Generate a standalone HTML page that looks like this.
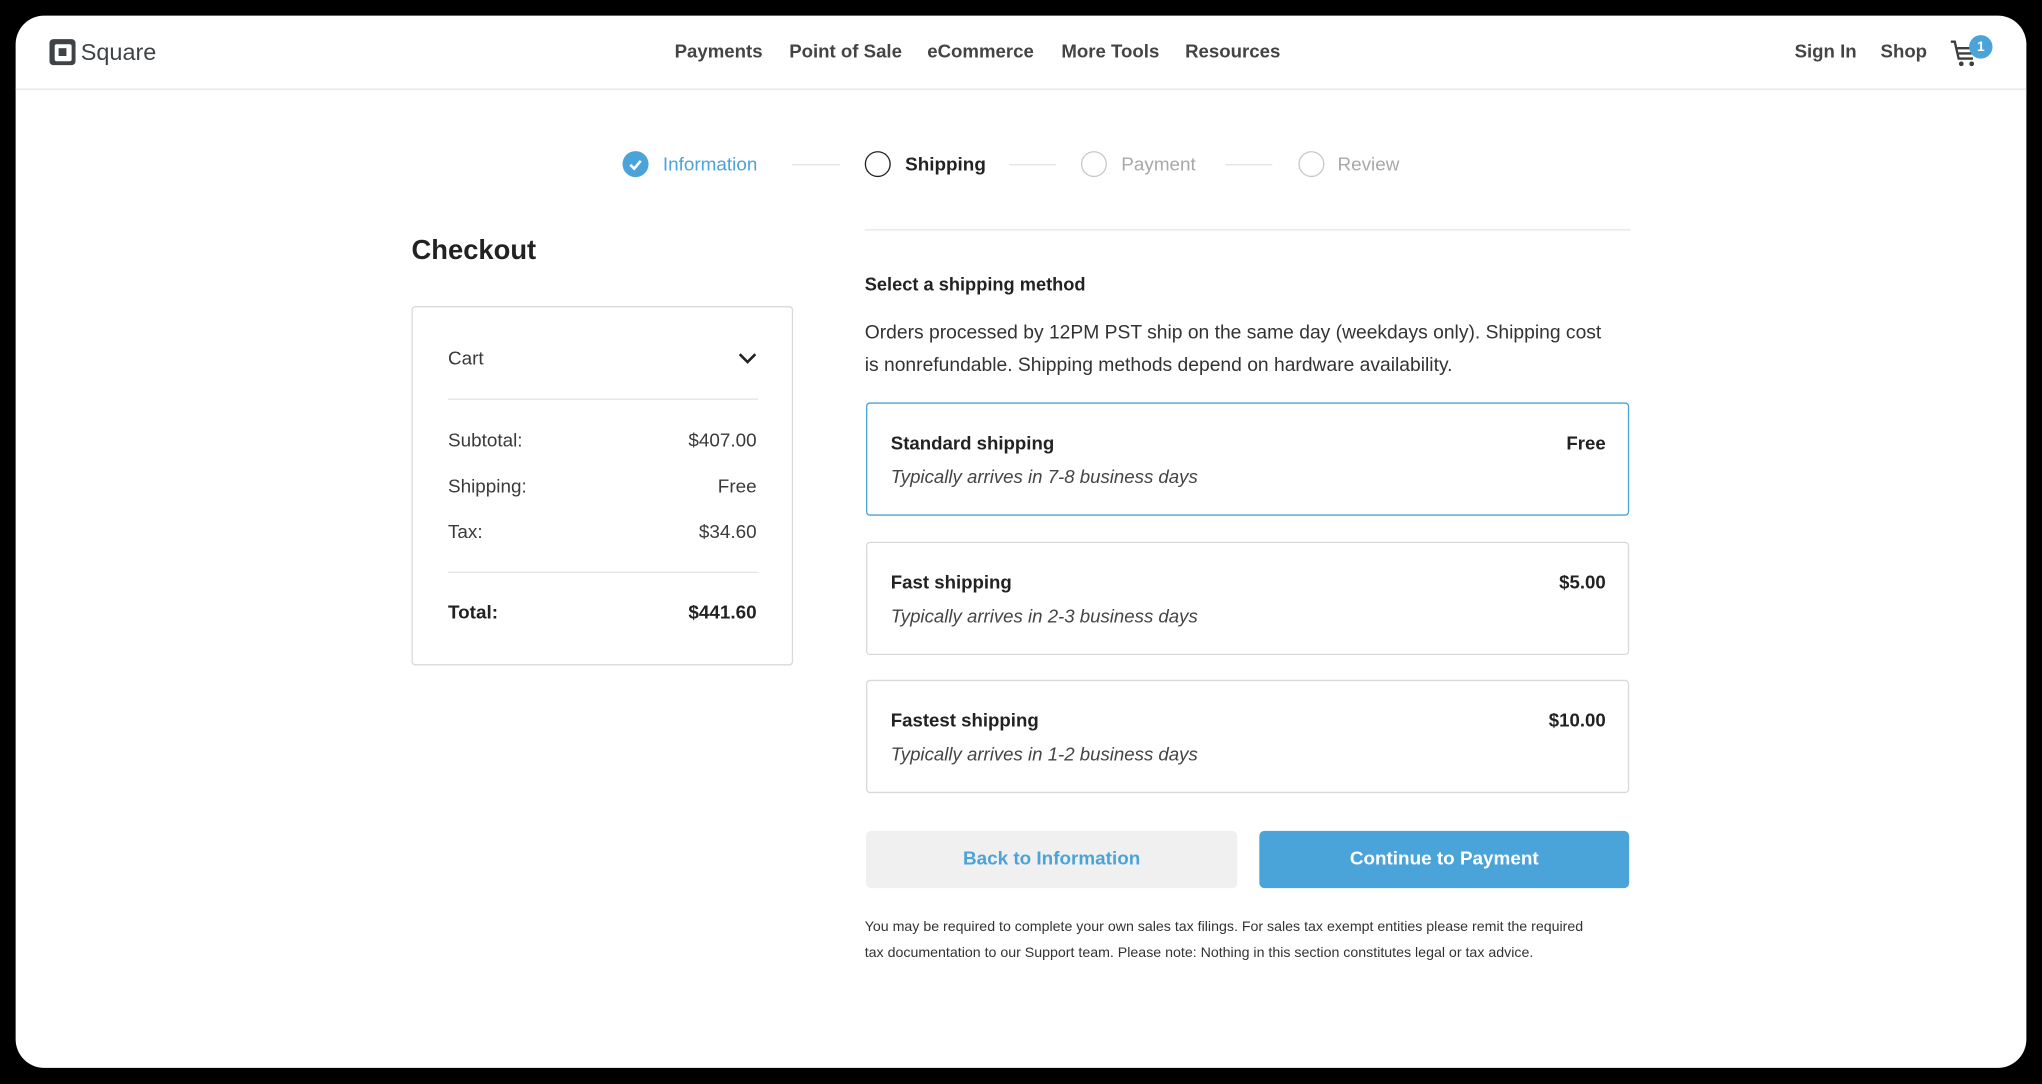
<!DOCTYPE html>
<html><head><meta charset="utf-8"><style>
html,body{margin:0;padding:0;background:#000;width:2042px;height:1083px;overflow:hidden}
#s{position:absolute;left:0;top:0;width:1568px;height:832px;transform:scale(1.30230);transform-origin:0 0;font-family:"Liberation Sans",sans-serif;color:#333}
.a{position:absolute;white-space:nowrap}
#w{position:absolute;left:12px;top:12px;width:1544px;height:808px;background:#fff;border-radius:22px;overflow:hidden}
.nav{font-size:14.3px;font-weight:bold;color:#444;top:32px}
.st{font-size:14.5px;top:119px}
.circ{position:absolute;width:20px;height:20px;border-radius:50%;top:116px;box-sizing:border-box}
.ln{position:absolute;height:1px;background:#e3e3e3;top:126px}
.row{font-size:14.5px;color:#3a3a3a}
.box{position:absolute;left:665px;width:586px;height:87px;box-sizing:border-box;border:1px solid #d9d9d9;border-radius:3px}
.box .t{position:absolute;left:18px;top:23px;font-size:14.3px;font-weight:bold;color:#222}
.box .p{position:absolute;right:17px;top:23px;font-size:14.3px;font-weight:bold;color:#222}
.box .d{position:absolute;left:18px;top:49px;font-size:14.3px;font-style:italic;color:#444}
</style></head><body><div id="s">
<div id="w"></div>
<div class="a" style="left:12px;top:68px;width:1544px;height:1px;background:#e4e4e4"></div>
<div class="a" style="left:38px;top:30px;width:20px;height:20px;background:#3e4348;border-radius:3px"></div>
<div class="a" style="left:41.5px;top:33.5px;width:13px;height:13px;background:#fff;border-radius:1.5px"></div>
<div class="a" style="left:45px;top:37px;width:6px;height:6px;background:#3e4348"></div>
<div class="a" style="left:62px;top:30px;font-size:18px;color:#3e4348">Square</div>
<div class="a nav" style="left:518px">Payments</div>
<div class="a nav" style="left:606px">Point of Sale</div>
<div class="a nav" style="left:712px">eCommerce</div>
<div class="a nav" style="left:815px">More Tools</div>
<div class="a nav" style="left:910px">Resources</div>
<div class="a nav" style="left:1378px">Sign In</div>
<div class="a nav" style="left:1444px">Shop</div>
<svg class="a" style="left:1497px;top:30px" width="26" height="24" viewBox="0 0 26 24"><path d="M1 2h3l3 13h11" fill="none" stroke="#3d3d3d" stroke-width="1.8"/><path d="M6 7h11M7 11h10" stroke="#3d3d3d" stroke-width="1.8"/><circle cx="9" cy="19" r="1.8" fill="#3d3d3d"/><circle cx="17" cy="19" r="1.8" fill="#3d3d3d"/></svg>
<div class="a" style="left:1512px;top:27px;width:18px;height:18px;border-radius:50%;background:#4aa3d9;color:#fff;font-size:10.5px;font-weight:bold;text-align:center;line-height:18px">1</div>

<div class="circ" style="left:478px;background:#4aa3d9"></div>
<svg class="a" style="left:478px;top:116px" width="20" height="20"><path d="M6 10.5l3 3 5-6" fill="none" stroke="#fff" stroke-width="2"/></svg>
<div class="a st" style="left:509px;color:#4aa3d9">Information</div>
<div class="ln" style="left:608px;width:37px"></div>
<div class="circ" style="left:664px;border:1.5px solid #222"></div>
<div class="a st" style="left:695px;color:#222;font-weight:bold">Shipping</div>
<div class="ln" style="left:775px;width:36px"></div>
<div class="circ" style="left:830px;border:1px solid #c8c8c8"></div>
<div class="a st" style="left:861px;color:#a8a8a8">Payment</div>
<div class="ln" style="left:941px;width:36px"></div>
<div class="circ" style="left:997px;border:1px solid #c8c8c8"></div>
<div class="a st" style="left:1027px;color:#a8a8a8">Review</div>

<div class="a" style="left:664px;top:176px;width:588px;height:1px;background:#e4e4e4"></div>
<div class="a" style="left:316px;top:181px;font-size:21px;font-weight:bold;color:#222">Checkout</div>

<div class="a" style="left:316px;top:235px;width:293px;height:276px;box-sizing:border-box;border:1px solid #d9d9d9;border-radius:3px"></div>
<div class="a row" style="left:344px;top:268px">Cart</div>
<svg class="a" style="left:566px;top:269px" width="16" height="12"><path d="M2 3l6 6 6-6" fill="none" stroke="#222" stroke-width="2"/></svg>
<div class="a" style="left:344px;top:306px;width:238px;height:1px;background:#e4e4e4"></div>
<div class="a row" style="left:344px;top:331px">Subtotal:</div><div class="a row" style="right:987px;top:331px">$407.00</div>
<div class="a row" style="left:344px;top:366px">Shipping:</div><div class="a row" style="right:987px;top:366px">Free</div>
<div class="a row" style="left:344px;top:401px">Tax:</div><div class="a row" style="right:987px;top:401px">$34.60</div>
<div class="a" style="left:344px;top:439px;width:238px;height:1px;background:#e4e4e4"></div>
<div class="a row" style="left:344px;top:463px;font-weight:bold;color:#222">Total:</div><div class="a row" style="right:987px;top:463px;font-weight:bold;color:#222">$441.60</div>

<div class="a" style="left:664px;top:210px;font-size:14px;font-weight:bold;color:#222">Select a shipping method</div>
<div class="a" style="left:664px;top:244px;font-size:14.8px;line-height:25px;color:#333">Orders processed by 12PM PST ship on the same day (weekdays only). Shipping cost<br>is nonrefundable. Shipping methods depend on hardware availability.</div>

<div class="box" style="top:309px;border-color:#4aa3d9"><div class="t">Standard shipping</div><div class="p">Free</div><div class="d">Typically arrives in 7-8 business days</div></div>
<div class="box" style="top:416px"><div class="t">Fast shipping</div><div class="p">$5.00</div><div class="d">Typically arrives in 2-3 business days</div></div>
<div class="box" style="top:522px"><div class="t">Fastest shipping</div><div class="p">$10.00</div><div class="d">Typically arrives in 1-2 business days</div></div>

<div class="a" style="left:665px;top:638px;width:285px;height:44px;background:#f0f0f0;border-radius:4px;color:#4aa3d9;font-size:14.5px;font-weight:bold;text-align:center;line-height:45px">Back to Information</div>
<div class="a" style="left:967px;top:638px;width:284px;height:44px;background:#4aa3d9;border-radius:4px;color:#fff;font-size:14.5px;font-weight:bold;text-align:center;line-height:45px">Continue to Payment</div>
<div class="a" style="left:664px;top:703px;font-size:10.9px;line-height:19.5px;color:#333">You may be required to complete your own sales tax filings. For sales tax exempt entities please remit the required<br>tax documentation to our Support team. Please note: Nothing in this section constitutes legal or tax advice.</div>
</div></body></html>
